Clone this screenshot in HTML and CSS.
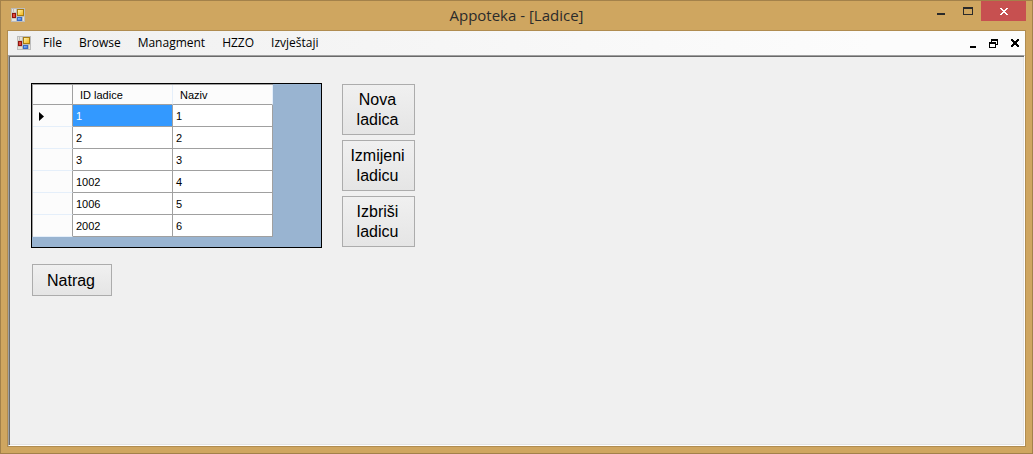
FILE: index.html
```html
<!DOCTYPE html>
<html lang="hr">
<head>
<meta charset="utf-8">
<title>Appoteka - [Ladice]</title>
<link rel="stylesheet" href="styles.css">
</head>
<body>
<svg class="defs" aria-hidden="true">
  <defs>
    <linearGradient id="gold" x1="0" y1="0" x2="1" y2="1"><stop offset="0" stop-color="#fff2a8"/><stop offset="1" stop-color="#f2b61c"/></linearGradient>
    <linearGradient id="blue" x1="0" y1="0" x2="1" y2="1"><stop offset="0" stop-color="#8fb8f5"/><stop offset="1" stop-color="#3f7ad8"/></linearGradient>
    <symbol id="form" viewBox="0 0 14 14" shape-rendering="crispEdges">
      <path d="M0 0h14v14H0z" fill="#bcbcbc"/>
      <path d="M1 1h1v3H1zM3 1h2v3H3zM1 11h4v2H1zM12 9h1v4h-1z" fill="#e6e2da"/>
      <path d="M0 4h5v7H0z" fill="#c9c5bd"/>
      <path d="M1 5h4v5H1z" fill="#8f1410"/><path d="M2 6h2v3H2z" fill="#e0483c"/>
      <path d="M6 1h7v7H6z" fill="#a87c10"/><path d="M7 2h5v5H7z" fill="url(#gold)"/>
      <path d="M6 9h5v4H6z" fill="#3569c6"/><path d="M7 10h3v2H7z" fill="url(#blue)"/>
    </symbol>
  </defs>
</svg>
<div class="window">
  <header class="titlebar">
    <svg class="app-icon" aria-hidden="true"><use href="#form"/></svg>
    <h1 class="title">Appoteka - [Ladice]</h1>
    <div class="controls">
      <button class="control minimize" aria-label="Minimize"><svg width="8" height="2"><path d="M0 0h8v2H0z" fill="#2a2a2a"/></svg></button>
      <button class="control" aria-label="Maximize"><svg width="10" height="8" shape-rendering="crispEdges"><path d="M0 0h10v8H0zM1 2v5h8V2z" fill="#2a2a2a" fill-rule="evenodd"/></svg></button>
      <button class="control close" aria-label="Close"><svg width="8" height="7" shape-rendering="crispEdges"><path fill="#fff" d="M0 0h2v1H0zM6 0h2v1H6zM1 1h2v1H1zM5 1h2v1H5zM2 2h4v1H2zM3 3h2v1H3zM2 4h4v1H2zM1 5h2v1H1zM5 5h2v1H5zM0 6h2v1H0zM6 6h2v1H6z"/></svg></button>
    </div>
  </header>
  <div class="client">
    <nav class="menubar">
      <svg class="menu-icon" aria-hidden="true"><use href="#form"/></svg>
      <div class="menus">
        <button class="menu">File</button>
        <button class="menu">Browse</button>
        <button class="menu">Managment</button>
        <button class="menu">HZZO</button>
        <button class="menu">Izvještaji</button>
      </div>
      <div class="child-controls">
        <button class="child minimize" aria-label="Minimize child"><svg width="6" height="2"><path d="M0 0h6v2H0z"/></svg></button>
        <button class="child" aria-label="Restore child"><svg width="9" height="9" shape-rendering="crispEdges"><path d="M2 0h7v6H7V5h1V2H3v1H2zM0 3h7v6H0zM1 5v3h5V5z" fill-rule="evenodd"/></svg></button>
        <button class="child" aria-label="Close child"><svg width="8" height="8" shape-rendering="crispEdges"><path d="M0 0h2v1H0zM6 0h2v1H6zM0 1h3v1H0zM5 1h3v1H5zM1 2h6v1H1zM2 3h4v2H2zM1 5h6v1H1zM0 6h3v1H0zM5 6h3v1H5zM0 7h2v1H0zM6 7h2v1H6z"/></svg></button>
      </div>
    </nav>
    <main class="workspace">
      <div class="content">
        <div class="grid">
          <table class="table">
            <thead><tr><th class="marker" aria-label="Row"></th><th scope="col">ID ladice</th><th scope="col">Naziv</th></tr></thead>
            <tbody>
              <tr><th class="marker" aria-label="Current row"><svg width="5" height="9" viewBox="0 0 10 18"><path d="M0 0l10 9-10 9z"/></svg></th><td class="selected">1</td><td>1</td></tr>
              <tr><th class="marker"></th><td>2</td><td>2</td></tr>
              <tr><th class="marker"></th><td>3</td><td>3</td></tr>
              <tr><th class="marker"></th><td>1002</td><td>4</td></tr>
              <tr><th class="marker"></th><td>1006</td><td>5</td></tr>
              <tr><th class="marker"></th><td>2002</td><td>6</td></tr>
            </tbody>
          </table>
        </div>
        <div class="actions">
          <button class="btn">Nova ladica</button>
          <button class="btn">Izmijeni ladicu</button>
          <button class="btn">Izbriši ladicu</button>
        </div>
      </div>
      <button class="btn back">Natrag</button>
    </main>
  </div>
</div>
</body>
</html>
```
FILE: styles.css
```css
* { box-sizing: border-box; }
body { margin: 0; }
button { margin: 0; padding: 0; border: 0; background: none; color: inherit; font: inherit; }
svg { display: block; }
.defs { position: absolute; width: 0; height: 0; }

.window {
  display: flex;
  flex-direction: column;
  min-height: 100vh;
  padding: 0 6px 6px;
  border: 1px solid #a3814a;
  background: #cfa660;
}

.titlebar {
  display: grid;
  grid-template-columns: 1fr auto 1fr;
  height: 29px;
  color: #2b2b2b;
}
.app-icon { width: 14px; height: 14px; margin: 7px 0 0 4px; }
.title {
  margin: 0;
  padding-top: 4px;
  font: 15px/20px "Open Sans", "Noto Sans", sans-serif;
}
.controls { display: flex; justify-content: flex-end; align-items: flex-start; }
.control { display: flex; justify-content: center; align-items: center; width: 27px; height: 20px; }
.control.minimize { padding-top: 5px; }
.control.close { width: 45px; background: #c75050; }

.client {
  display: flex;
  flex: 1;
  flex-direction: column;
  border: 1px solid #b08c50;
}
.menubar {
  display: flex;
  align-items: center;
  height: 24px;
  padding: 0 6px 0 9px;
  background: linear-gradient(to right, #f0f0f0, #fcfcfc 85%);
  color: #000;
  font: 12px/16px "Open Sans", "Noto Sans", sans-serif;
}
.menu-icon { width: 14px; height: 14px; margin-right: 12px; }
.menus { display: flex; gap: 17px; }
.child-controls { display: flex; gap: 13px; margin-left: auto; }
.child { display: flex; align-items: center; height: 10px; }
.child.minimize { align-items: flex-end; }

.workspace {
  flex: 1;
  padding: 27px 21px;
  border: 1px solid;
  border-color: #a0a0a0 #fff #fff #a0a0a0;
  box-shadow: inset 1px 1px #696969, inset -1px -1px #e3e3e3;
  background: #f0f0f0;
}
.content { display: flex; align-items: flex-start; gap: 20px; padding-left: 1px; }
.grid {
  width: 291px;
  height: 165px;
  border: 1px solid #000;
  background: #99b4d1;
}
.table {
  width: 241px;
  border-collapse: separate;
  border-spacing: 0;
  border-top: 1px solid #a0a0a0;
  border-left: 1px solid #a0a0a0;
  table-layout: fixed;
  font: 11px/13px "Liberation Sans", Arial, sans-serif;
}
.table th, .table td {
  height: 22px;
  padding: 1px 3px 0;
  border-right: 1px solid #a0a0a0;
  border-bottom: 1px solid #a0a0a0;
  background: #fff;
  font-weight: normal;
  text-align: left;
}
.table thead th { height: 20px; padding: 1px 7px 0; border-right-color: #e5effa; background: #fcfcfc; }
.table thead .marker, .table .marker { width: 40px; padding: 1px 6px 0; border-right-color: #a0a0a0; background: #fcfcfc; }
.table tbody .marker { border-bottom-color: #e5effa; }
.table .selected { background: #39f; color: #fff; }

.actions { display: flex; flex-direction: column; gap: 5px; }
.btn {
  width: 73px;
  height: 51px;
  padding-right: 2px;
  border: 1px solid #acacac;
  background: linear-gradient(#f0f0f0, #e5e5e5);
  color: #000;
  font: 16px/20px "Liberation Sans", Arial, sans-serif;
}
.actions { padding-top: 1px; }
.btn.back { display: block; width: 80px; height: 32px; margin: 16px 0 0 2px; padding-top: 1px; }
```
